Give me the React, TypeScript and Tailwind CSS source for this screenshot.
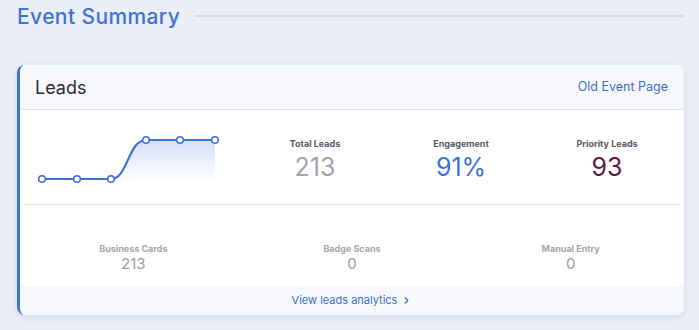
import React from 'react';
import { ChevronRight } from 'lucide-react';

const font = { fontFamily: '"Inter", "Liberation Sans", sans-serif' };

const LeadsChart: React.FC = () => {
  const pts = [
    [18, 68],
    [53, 68],
    [87, 68],
    [122, 29],
    [156, 29],
    [191, 29],
  ];
  return (
    <svg width="218" height="94" viewBox="0 0 218 94">
      <defs>
        <linearGradient id="fade" x1="0" y1="0" x2="0" y2="1">
          <stop offset="0%" stopColor="#3d72d6" stopOpacity="0.22" />
          <stop offset="100%" stopColor="#3d72d6" stopOpacity="0" />
        </linearGradient>
      </defs>
      <path d="M87 68 C104 68 104 29 122 29 L191 29 L191 70 L100 70 Z" fill="url(#fade)" />
      <path
        d="M18 68 L87 68 C104 68 104 29 122 29 L191 29"
        fill="none"
        stroke="#3d72d6"
        strokeWidth="2.2"
      />
      {pts.map(([x, y], i) => (
        <circle key={i} cx={x} cy={y} r="3.3" fill="#fff" stroke="#3d72d6" strokeWidth="1.6" />
      ))}
    </svg>
  );
};

const Stat: React.FC<{ label: string; value: string; color: string }> = ({ label, value, color }) => (
  <div className="w-[146px] flex flex-col items-center">
    <span className="text-[9px] font-bold text-[#555a63] leading-none">{label}</span>
    <span className={`text-[25px] leading-none mt-[7px] ${color}`}>{value}</span>
  </div>
);

const SubStat: React.FC<{ label: string; value: string }> = ({ label, value }) => (
  <div className="flex-1 flex flex-col items-center">
    <span className="text-[9px] font-bold text-[#a3a6ad] leading-none">{label}</span>
    <span className="text-[15px] text-[#9a9da4] leading-none mt-[3px]">{value}</span>
  </div>
);

export default function App() {
  return (
    <div className="w-[699px] h-[330px] bg-[#eaeff8] overflow-hidden" style={font}>
      <div className="flex items-center pl-[17px] pr-[14px] h-[32px]">
        <h1 className="text-[21px] leading-none tracking-[0.4px] text-[#3d72d6] font-medium">Event Summary</h1>
        <div className="flex-1 ml-[14px] h-[2px] bg-[#d7dce6] rounded-full" />
      </div>

      <div className="ml-[17px] mt-[33px] w-[667px] h-[250px] bg-white rounded-lg border-l-[3px] border-[#3d72d6] shadow-[0_2px_6px_rgba(30,50,90,0.12)] overflow-hidden flex flex-col">
        <div className="h-[45px] shrink-0 bg-[#f6f8fb] border-b border-[#dfe3ea] flex items-center justify-between pl-[15px] pr-[16px]">
          <span className="text-[18px] text-[#2a2d33]">Leads</span>
          <span className="text-[12.5px] text-[#3d6fc9]">Old Event Page</span>
        </div>

        <div className="px-[4px] flex-1 flex flex-col">
          <div className="h-[95px] flex items-center border-b border-[#dde1e7]">
            <div className="pt-[2px]">
              <LeadsChart />
            </div>
            <div className="flex items-start pt-[4px]">
              <Stat label="Total Leads" value="213" color="text-[#a1a4ab]" />
              <Stat label="Engagement" value="91%" color="text-[#3d72d6]" />
              <Stat label="Priority Leads" value="93" color="text-[#5b1a43]" />
            </div>
          </div>
          <div className="flex-1 flex items-start pt-[39px]">
            <SubStat label="Business Cards" value="213" />
            <SubStat label="Badge Scans" value="0" />
            <SubStat label="Manual Entry" value="0" />
          </div>
        </div>

        <div className="h-[29px] shrink-0 bg-[#f6f8fb] flex items-center justify-center gap-[4px] text-[11px] text-[#3d6fc9]">
          <span>View leads analytics</span>
          <ChevronRight size={11} strokeWidth={2.5} />
        </div>
      </div>
    </div>
  );
}
